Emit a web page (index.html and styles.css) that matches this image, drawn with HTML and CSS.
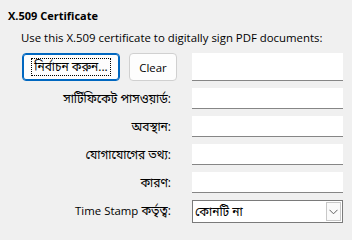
FILE: index.html
```html
<!DOCTYPE html>
<html lang="bn">
<head>
<meta charset="utf-8">
<link rel="stylesheet" href="styles.css">
</head>
<body>
<div class="panel">
  <div class="title">X.509 Certificate</div>
  <div class="desc">Use this X.509 certificate to digitally sign PDF documents:</div>
  <div class="form">
    <div class="buttons">
      <button class="btn btn-primary"><span class="focus">নির্বাচন করুন...</span></button>
      <button class="btn"><span class="latin">Clear</span></button>
    </div>
    <div class="field field-tall"></div>

    <label class="label">সার্টিফিকেট পাসওয়ার্ড:</label>
    <div class="field"></div>

    <label class="label">অবস্থান:</label>
    <div class="field"></div>

    <label class="label">যোগাযোগের তথ্য:</label>
    <div class="field"></div>

    <label class="label">কারণ:</label>
    <div class="field"></div>

    <label class="label"><span class="latin">Time Stamp</span> কর্তৃত্ব:</label>
    <div class="combo">
      <span class="combo-text">কোনটি না</span>
      <span class="combo-btn">
        <svg width="9" height="6" viewBox="0 0 9 6"><path d="M0.5 0.8 L4.5 4.8 L8.5 0.8" fill="none" stroke="#606060" stroke-width="1"/></svg>
      </span>
    </div>
  </div>
</div>
</body>
</html>
```

FILE: styles.css
```css
html, body {
  margin: 0;
  padding: 0;
  background: #f0f0f0;
}
body {
  width: 352px;
  height: 231px;
  overflow: hidden;
  font-family: "Open Sans", "Noto Sans", "Noto Sans Bengali", "Lohit Bengali", "FreeSans", sans-serif;
  font-size: 12px;
  color: #000;
}
.latin {
  font-size: 11.4px;
}
.panel {
  padding-top: 7px;
}
.title {
  font-weight: 700;
  font-size: 11px;
  line-height: 18px;
  padding-left: 8px;
}
.desc {
  font-size: 11.4px;
  padding-left: 21px;
  line-height: 18px;
  margin-top: 4px;
}
.form {
  display: grid;
  grid-template-columns: 158px 151px;
  grid-template-rows: 28px;
  grid-auto-rows: 21px;
  column-gap: 12px;
  row-gap: 7px;
  padding-left: 22px;
  margin-top: 6px;
}
.buttons {
  display: flex;
  gap: 9px;
  height: 28px;
}
.btn {
  font: inherit;
  font-size: 12px;
  height: 28px;
  box-sizing: border-box;
  border: 1px solid #d0d0d0;
  border-radius: 4px;
  background: #fdfdfd;
  color: #000;
  padding: 0;
  width: 48px;
  display: flex;
  align-items: center;
  justify-content: center;
}
.btn-primary {
  width: 98px;
  border: 1px solid #0067c0;
  box-shadow: inset 0 0 0 1px #0067c0;
}
.focus {
  display: block;
  width: 80px;
  height: 18px;
  box-sizing: border-box;
  border: 1px dotted #000;
  line-height: 16px;
  text-align: center;
  white-space: nowrap;
}
.label {
  text-align: right;
  line-height: 21px;
  white-space: nowrap;
  padding-right: 9px;
}
.field {
  background: #fff;
  border-bottom: 1px solid #868686;
  box-sizing: border-box;
}
.field-tall {
  height: 28px;
}
.combo {
  background: #fff;
  border: 1px solid #7a7a7a;
  box-sizing: border-box;
  height: 23px;
  display: flex;
  align-items: center;
  justify-content: space-between;
  padding: 0 1px 0 2px;
}
.combo-text {
  line-height: 19px;
}
.combo-btn {
  width: 15px;
  height: 19px;
  box-sizing: border-box;
  border: 1px solid #c8c8c8;
  background: #fafafa;
  display: flex;
  align-items: center;
  justify-content: center;
}
```
